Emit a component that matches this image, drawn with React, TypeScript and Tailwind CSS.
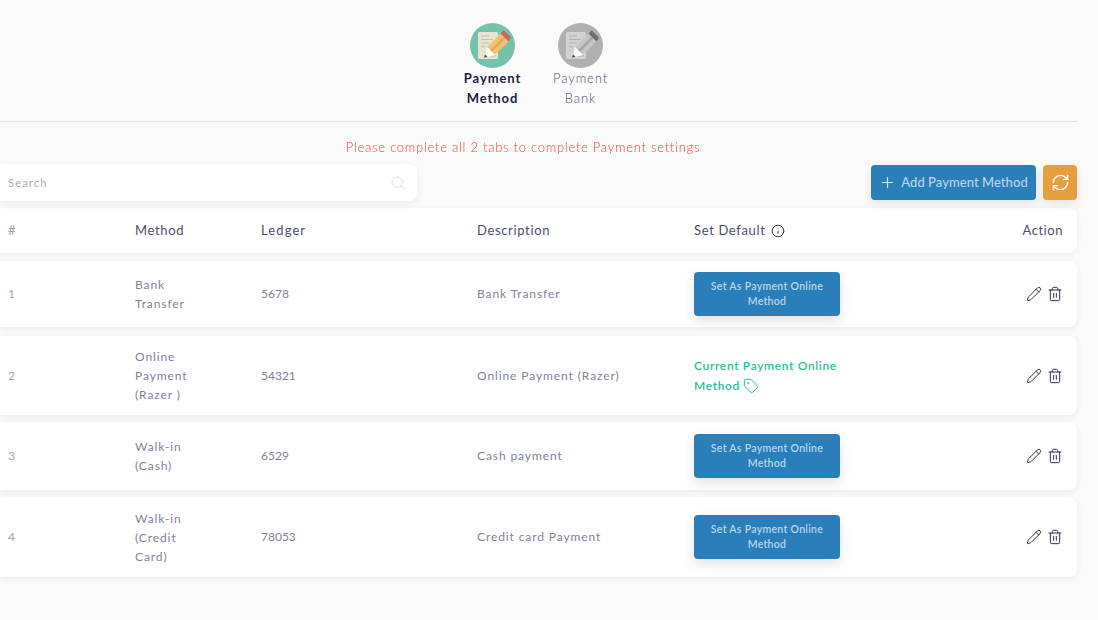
import React from 'react';
import { Plus, RefreshCw, Search, Info, Tag, Pencil, Trash2 } from 'lucide-react';

const cols = 'grid grid-cols-[127px_126px_216px_217px_1fr] items-center pl-2 pr-3.5';

const rows = [
  { id: 1, method: ['Bank', 'Transfer'], ledger: '5678', desc: 'Bank Transfer', current: false, h: 'h-[66px] mb-[2px]' },
  { id: 2, method: ['Online', 'Payment', '(Razer )'], ledger: '54321', desc: 'Online Payment (Razer)', current: true, h: 'h-[79px]' },
  { id: 3, method: ['Walk-in', '(Cash)'], ledger: '6529', desc: 'Cash payment', current: false, h: 'h-[68px]' },
  { id: 4, method: ['Walk-in', '(Credit', 'Card)'], ledger: '78053', desc: 'Credit card Payment', current: false, h: 'h-[80px]' },
];

const StepIcon = ({ active }: { active: boolean }) => {
  const paper = active ? '#e8e4cf' : '#d2d2d0';
  const line = active ? '#c4c1ad' : '#b0b0ae';
  const body = active ? '#f2c27a' : '#c6c6c6';
  const stripe = active ? '#eea55a' : '#a6a6a6';
  const cap = active ? '#d0655f' : '#6f6f6f';
  return (
    <svg width="45" height="45" viewBox="0 0 45 45">
      <circle cx="22.5" cy="22.5" r="22.5" fill={active ? '#74c2ab' : '#b0b0b0'} />
      <rect x="8" y="9" width="20" height="27" rx="1.5" fill={paper} />
      <path d="M11 13h8M11 16.500h12M11 20h8M11 23.500h4M20 33h6" stroke={line} strokeWidth="1" />
      <path d="M17 24L30.500 10.500l8 8L25 32z" fill={body} />
      <path d="M20 27L33.500 13.500l2 2L22 29z" fill={stripe} />
      <path d="M30.500 10.500l2.500-2.500a1 1 0 0 1 1.400 0l6.100 6.100a1 1 0 0 1 0 1.400L38.500 18.500z" fill={cap} />
      <path d="M17 24l8 8-10.500 2.500z" fill="#fff" />
      <path d="M15 31.500l2.500 2.300-3.500.9z" fill="#444" />
    </svg>
  );
};

const Step = ({ active, lines }: { active: boolean; lines: string[] }) => (
  <div className="flex flex-col items-center w-[88px]">
    <StepIcon active={active} />
    <div className={`text-[13px] leading-5 tracking-[0.9px] text-center ${active ? 'font-bold text-[#1d2240]' : 'font-light text-[#4d5470]'}`}>
      {lines.map((l) => (
        <div key={l}>{l}</div>
      ))}
    </div>
  </div>
);

const App = () => {
  return (
    <div className="w-[1098px] h-[620px] overflow-hidden bg-[#fafafa] font-['Lato','Open_Sans',sans-serif]">
      <div className="w-[1077px]">
        <div className="flex justify-center pt-[23px] h-[122px] border-b border-[#e2e2e6]">
          <div className="flex ml-[-4px]">
            <Step active lines={['Payment', 'Method']} />
            <Step active={false} lines={['Payment', 'Bank']} />
          </div>
        </div>

        <p className="mt-[17px] ml-[-31px] text-center text-[13px] leading-4 font-light tracking-[0.73px] bg-gradient-to-r from-[#ff4a10] to-[#ff0f3c] bg-clip-text text-transparent">
          Please complete all 2 tabs to complete Payment settings
        </p>

        <div className="flex items-start justify-between mt-[9px]">
          <div className="w-[417px] h-[37px] bg-white rounded-r-lg shadow-[0_3px_8px_rgba(40,40,70,0.06)] flex items-center justify-between pl-2 pr-[11px]">
            <span className="mt-[1px] text-[11px] font-normal tracking-[1.2px] text-[#a9adc0]">Search</span>
            <Search size={16} strokeWidth={1.3} className="text-[#d9dbe2]" />
          </div>
          <div className="flex gap-[7px] mt-[1px]">
            <button className="w-[165px] h-[35px] rounded bg-[#2a7fba] text-[#b9d5ea] text-[13px] font-medium tracking-[0.05px] flex items-center justify-center gap-[5px] shadow-[0_4px_10px_rgba(40,40,70,0.1)]">
              <Plus size={17} strokeWidth={1.7} className="text-[#cfe2f0]" />
              Add Payment Method
            </button>
            <button className="w-[34px] h-[35px] rounded bg-[#e5a03e] text-white flex items-center justify-center shadow-[0_4px_10px_rgba(40,40,70,0.1)]">
              <RefreshCw size={19} strokeWidth={1.7} />
            </button>
          </div>
        </div>

        <div className={`${cols} h-[45px] mt-[7px] bg-white rounded-r-lg shadow-[0_2px_6px_rgba(40,40,70,0.06)] text-[13px] tracking-[0.65px] text-[#4b4f6b]`}>
          <span className="text-[#9a9eb3]">#</span>
          <span>Method</span>
          <span className="tracking-[1.1px]">Ledger</span>
          <span className="mt-[1px]">Description</span>
          <div className="flex items-center justify-between">
            <span className="flex items-center gap-[5px]">
              Set Default <Info size={14} strokeWidth={1.7} className="text-[#33374f]" />
            </span>
            <span className="tracking-[0.55px]">Action</span>
          </div>
        </div>

        <div className="flex flex-col gap-[7px] mt-[8px]">
          {rows.map((r) => (
            <div
              key={r.id}
              className={`${cols} ${r.h} bg-white rounded-r-lg shadow-[0_2px_6px_rgba(40,40,70,0.07)] text-[12px] tracking-[0.9px] text-[#7e829b]`}
            >
              <span className="text-[#a0a4b8]">{r.id}</span>
              <div className="leading-[19px]">
                {r.method.map((m) => (
                  <div key={m}>{m}</div>
                ))}
              </div>
              <span className="tracking-[0px]">{r.ledger}</span>
              <span>{r.desc}</span>
              <div className="flex items-center justify-between">
                {r.current ? (
                  <div className="text-[12px] leading-5 font-semibold tracking-[0.65px] text-[#1fc29b] w-[150px]">
                    Current Payment Online
                    <div className="flex items-center gap-[3px]">
                      Method <Tag size={16} strokeWidth={1.5} />
                    </div>
                  </div>
                ) : (
                  <button className="w-[146px] h-[44px] rounded bg-[#2a7fba] text-[#b9d5ea] text-[10.5px] leading-[15px] font-semibold tracking-[0.3px] shadow-[0_5px_12px_rgba(40,40,70,0.14)]">
                    Set As Payment Online
                    <br />
                    Method
                  </button>
                )}
                <div className="flex items-center gap-[5px] text-[#2f3350]">
                  <Pencil size={16} strokeWidth={1.5} />
                  <Trash2 size={16} strokeWidth={1.5} />
                </div>
              </div>
            </div>
          ))}
        </div>
      </div>
    </div>
  );
};

export default App;
